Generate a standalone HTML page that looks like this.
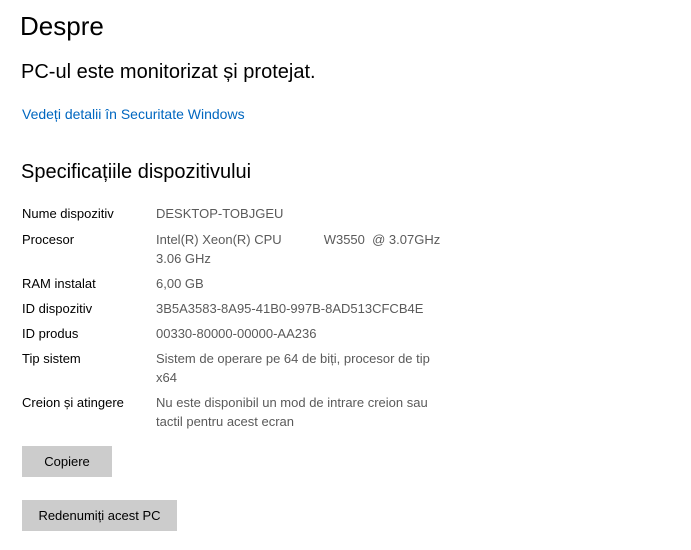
<!DOCTYPE html>
<html><head><meta charset="utf-8"><style>
body{margin:0;width:691px;height:550px;background:#fff;font-family:"Liberation Sans",sans-serif;position:relative;overflow:hidden;color:#000}
.a{position:absolute;white-space:nowrap}
.l{left:22px;font-size:13px}
.v{left:156px;font-size:13px;color:#5a5a5a}
.btn{position:absolute;left:22px;background:#ccc;font-size:13px;text-align:center;line-height:31px;height:31px}
</style></head><body>
<div class="a" style="left:20px;top:11px;font-size:26px">Despre</div>
<div class="a" style="left:21px;top:61px;font-size:20px">PC-ul este monitorizat și protejat.</div>
<div class="a" style="left:22px;top:106px;font-size:14px;color:#0067c0">Vedeți detalii în Securitate Windows</div>
<div class="a" style="left:21px;top:161px;font-size:20px">Specificațiile dispozitivului</div>
<div class="a l" style="top:206px">Nume dispozitiv</div><div class="a v" style="top:206px">DESKTOP-TOBJGEU</div>
<div class="a l" style="top:232px">Procesor</div><div class="a v" style="top:232px">Intel(R) Xeon(R) CPU<span style="display:inline-block;width:42px"></span>W3550&nbsp; @ 3.07GHz</div>
<div class="a v" style="top:251px">3.06 GHz</div>
<div class="a l" style="top:276px">RAM instalat</div><div class="a v" style="top:276px">6,00 GB</div>
<div class="a l" style="top:301px">ID dispozitiv</div><div class="a v" style="top:301px">3B5A3583-8A95-41B0-997B-8AD513CFCB4E</div>
<div class="a l" style="top:326px">ID produs</div><div class="a v" style="top:326px">00330-80000-00000-AA236</div>
<div class="a l" style="top:351px">Tip sistem</div><div class="a v" style="top:351px">Sistem de operare pe 64 de biți, procesor de tip</div>
<div class="a v" style="top:370px">x64</div>
<div class="a l" style="top:395px">Creion și atingere</div><div class="a v" style="top:395px">Nu este disponibil un mod de intrare creion sau</div>
<div class="a v" style="top:414px">tactil pentru acest ecran</div>
<div class="btn" style="top:446px;width:90px">Copiere</div>
<div class="btn" style="top:500px;width:155px">Redenumiți acest PC</div>
</body></html>
